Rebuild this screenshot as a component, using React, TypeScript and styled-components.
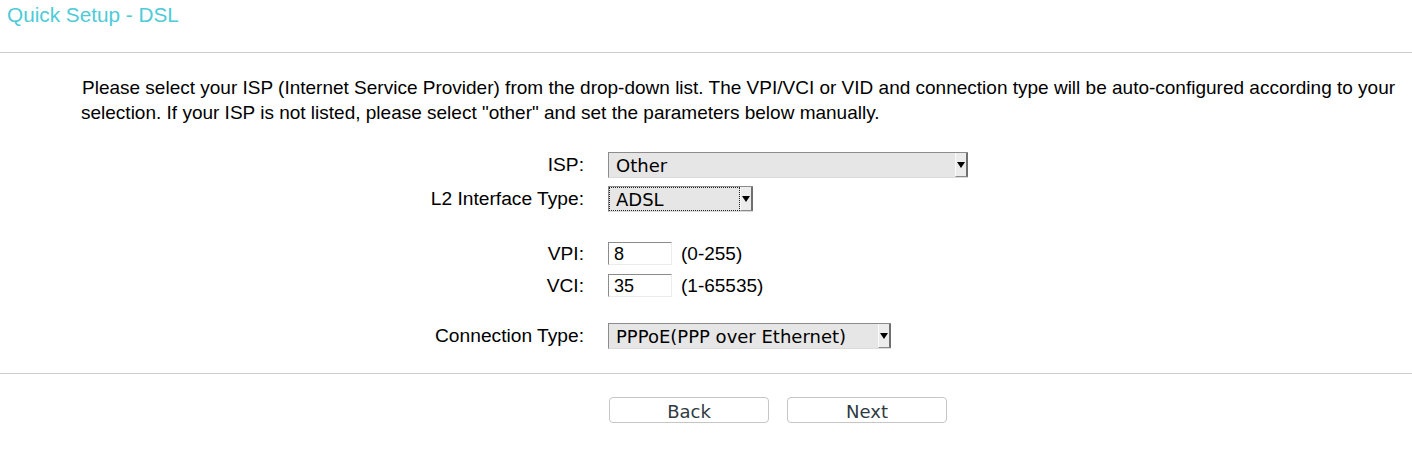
import React from 'react';
import styled, { createGlobalStyle } from 'styled-components';

const GlobalStyle = createGlobalStyle`
  body {
    margin: 0;
    background: #fff;
    font-family: 'Liberation Sans', Arial, sans-serif;
    color: #000;
  }
`;

const Header = styled.div`
  height: 49px;
  padding: 3px 0 0 7px;
  border-bottom: 1px solid #cccccc;
`;

const Title = styled.h1`
  margin: 0;
  font-size: 20.75px;
  font-weight: normal;
  color: #4ecbd7;
  line-height: 1.15;
`;

const Intro = styled.p`
  margin: 22px 0 0 0;
  padding: 0 14px 0 81px;
  text-indent: 1px;
  font-size: 19px;
  line-height: 25px;
`;

const Form = styled.div`
  margin-top: 27px;
`;

const Row = styled.div<{ $gap: number }>`
  display: grid;
  grid-template-columns: 584px auto;
  column-gap: 24px;
  align-items: center;
  margin-top: ${({ $gap }) => $gap}px;
`;

const Label = styled.label`
  text-align: right;
  font-size: 19.2px;
`;

const Field = styled.div`
  display: flex;
  align-items: center;
  gap: 9px;
  font-size: 19px;
`;

const Select = styled.div<{ $width: number }>`
  display: flex;
  width: ${({ $width }) => $width}px;
  height: 26px;
  box-sizing: border-box;
  background: #e6e6e6;
  border-top: 1px solid #8c8c8c;
  border-left: 1px solid #8c8c8c;
  border-bottom: 1px solid #dadada;
`;

const SelectText = styled.span<{ $focused?: boolean }>`
  flex: 1;
  display: flex;
  align-items: center;
  padding-left: 6px;
  font-family: 'DejaVu Sans', sans-serif;
  font-size: 18px;
  color: #000;
  box-sizing: border-box;
  border: 1px dotted ${({ $focused }) => ($focused ? '#222' : 'transparent')};
  white-space: nowrap;
  overflow: hidden;
`;

const Arrow = styled.span`
  width: 13px;
  display: flex;
  align-items: center;
  justify-content: center;
  background: #ececec;
  border-left: 1px solid #fafafa;
  border-right: 2px solid #6f6f6f;
  border-bottom: 1px solid #8a8a8a;
  box-sizing: border-box;
  &::after {
    content: '';
    margin-top: 1px;
    border-left: 4px solid transparent;
    border-right: 4px solid transparent;
    border-top: 6px solid #000;
  }
`;

const Input = styled.div`
  width: 64px;
  height: 23px;
  box-sizing: border-box;
  border-top: 1px solid #8c8c8c;
  border-left: 1px solid #8c8c8c;
  border-right: 1px solid #ececec;
  border-bottom: 1px solid #ececec;
  padding: 1px 0 0 5px;
  display: flex;
  align-items: center;
  font-size: 18px;
`;

const Rule = styled.hr`
  margin: 24px 0 0 0;
  border: none;
  border-top: 1px solid #cccccc;
`;

const Buttons = styled.div`
  display: flex;
  gap: 18px;
  padding: 23px 0 0 609px;
`;

const Button = styled.button`
  width: 160px;
  height: 26px;
  background: #fff;
  border: 1px solid #c6c6c6;
  border-radius: 4px;
  font-family: 'DejaVu Sans', sans-serif;
  font-size: 18px;
  color: #2f3a43;
  padding: 3px 0 0 0;
  line-height: 1;
`;

const SelectField = ({ value, width, focused }: { value: string; width: number; focused?: boolean }) => (
  <Select $width={width}>
    <SelectText $focused={focused}>{value}</SelectText>
    <Arrow />
  </Select>
);

export default function App() {
  return (
    <>
      <GlobalStyle />
      <Header>
        <Title>Quick Setup - DSL</Title>
      </Header>
      <Intro>
        Please select your ISP (Internet Service Provider) from the drop-down list. The VPI/VCI or VID and
        connection type will be auto-configured according to your selection. If your ISP is not listed, please
        select "other" and set the parameters below manually.
      </Intro>
      <Form>
        <Row $gap={0}>
          <Label>ISP:</Label>
          <Field>
            <SelectField value="Other" width={360} />
          </Field>
        </Row>
        <Row $gap={8}>
          <Label>L2 Interface Type:</Label>
          <Field>
            <SelectField value="ADSL" width={145} focused />
          </Field>
        </Row>
        <Row $gap={30}>
          <Label>VPI:</Label>
          <Field>
            <Input>8</Input>
            <span>(0-255)</span>
          </Field>
        </Row>
        <Row $gap={9}>
          <Label>VCI:</Label>
          <Field>
            <Input>35</Input>
            <span>(1-65535)</span>
          </Field>
        </Row>
        <Row $gap={26}>
          <Label>Connection Type:</Label>
          <Field>
            <SelectField value="PPPoE(PPP over Ethernet)" width={283} />
          </Field>
        </Row>
      </Form>
      <Rule />
      <Buttons>
        <Button>Back</Button>
        <Button>Next</Button>
      </Buttons>
    </>
  );
}
